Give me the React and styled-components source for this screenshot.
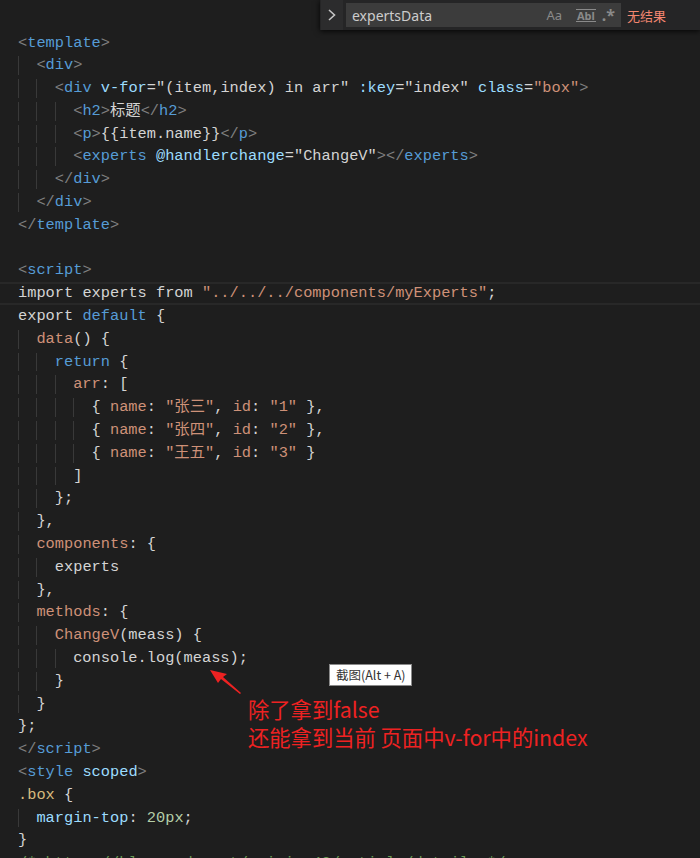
import React from "react";
import styled, { createGlobalStyle } from "styled-components";

const Global = createGlobalStyle`
  html, body { margin: 0; padding: 0; background: #1e1e1e; }
  body { width: 700px; height: 858px; overflow: hidden; }
`;

const COLORS = {
  p: "#808080",
  t: "#569cd6",
  a: "#9cdcfe",
  w: "#d4d4d4",
  s: "#ce9178",
  k: "#569cd6",
  y: "#d7ba7d",
  n: "#b5cea8",
  c: "#6a9955",
};

const Page = styled.div`
  position: relative;
  width: 700px;
  height: 858px;
  overflow: hidden;
  background: #1e1e1e;
`;

const Editor = styled.div`
  padding-top: 31.5px;
  font-family: "Liberation Mono", "Noto Sans CJK SC", monospace;
  font-size: 15.33px;
  color: #d4d4d4;
`;

const Line = styled.div`
  box-sizing: border-box;
  height: 22.8px;
  padding-left: 18px;
  white-space: pre;
  display: flex;
  align-items: stretch;
  border-top: 2px solid ${(p) => (p.$current ? "#282828" : "transparent")};
  border-bottom: 2px solid ${(p) => (p.$current ? "#282828" : "transparent")};
  line-height: 18.8px;
`;

const Guide = styled.span`
  display: inline-block;
  width: 2ch;
  flex: none;
  box-shadow: inset 1px 0 0 #393939;
`;

const Tok = styled.span`
  color: ${(p) => COLORS[p.$c]};
`;

const lines = [
  [0, [["p", "<"], ["t", "template"], ["p", ">"]]],
  [1, [["p", "<"], ["t", "div"], ["p", ">"]]],
  [2, [["p", "<"], ["t", "div"], ["w", " "], ["a", "v-for"], ["w", '="(item,index) in arr" '], ["a", ":key"], ["w", '="index" '], ["a", "class"], ["w", "="], ["s", '"box"'], ["p", ">"]]],
  [3, [["p", "<"], ["t", "h2"], ["p", ">"], ["w", "标题"], ["p", "</"], ["t", "h2"], ["p", ">"]]],
  [3, [["p", "<"], ["t", "p"], ["p", ">"], ["w", "{{item.name}}"], ["p", "</"], ["t", "p"], ["p", ">"]]],
  [3, [["p", "<"], ["t", "experts"], ["w", " "], ["a", "@handlerchange"], ["w", '="ChangeV"'], ["p", "></"], ["t", "experts"], ["p", ">"]]],
  [2, [["p", "</"], ["t", "div"], ["p", ">"]]],
  [1, [["p", "</"], ["t", "div"], ["p", ">"]]],
  [0, [["p", "</"], ["t", "template"], ["p", ">"]]],
  [0, []],
  [0, [["p", "<"], ["t", "script"], ["p", ">"]]],
  [0, [["w", "import experts from "], ["s", '"../../../components/myExperts"'], ["w", ";"]], true],
  [0, [["w", "export "], ["k", "default"], ["w", " {"]]],
  [1, [["s", "data"], ["w", "() {"]]],
  [2, [["k", "return"], ["w", " {"]]],
  [3, [["s", "arr"], ["w", ": ["]]],
  [4, [["w", "{ "], ["s", "name"], ["w", ": "], ["s", '"张三"'], ["w", ", "], ["s", "id"], ["w", ": "], ["s", '"1"'], ["w", " },"]]],
  [4, [["w", "{ "], ["s", "name"], ["w", ": "], ["s", '"张四"'], ["w", ", "], ["s", "id"], ["w", ": "], ["s", '"2"'], ["w", " },"]]],
  [4, [["w", "{ "], ["s", "name"], ["w", ": "], ["s", '"王五"'], ["w", ", "], ["s", "id"], ["w", ": "], ["s", '"3"'], ["w", " }"]]],
  [3, [["w", "]"]]],
  [2, [["w", "};"]]],
  [1, [["w", "},"]]],
  [1, [["s", "components"], ["w", ": {"]]],
  [2, [["w", "experts"]]],
  [1, [["w", "},"]]],
  [1, [["s", "methods"], ["w", ": {"]]],
  [2, [["s", "ChangeV"], ["w", "(meass) {"]]],
  [3, [["w", "console.log(meass);"]]],
  [2, [["w", "}"]]],
  [1, [["w", "}"]]],
  [0, [["w", "};"]]],
  [0, [["p", "</"], ["t", "script"], ["p", ">"]]],
  [0, [["p", "<"], ["t", "style"], ["w", " "], ["a", "scoped"], ["p", ">"]]],
  [0, [["y", ".box"], ["w", " {"]]],
  [1, [["a", "margin-top"], ["w", ": "], ["n", "20px"], ["w", ";"]]],
  [0, [["w", "}"]]],
  [0, [["c", "/* https://blog.csdn.net/weixin_43/article/details */"]]],
];

/* Find widget */
const FindWidget = styled.div`
  position: absolute;
  top: 0;
  left: 320px;
  right: 0;
  height: 30px;
  background: #252526;
  box-shadow: 0 1px 6px rgba(0, 0, 0, 0.9);
  display: flex;
  align-items: center;
  font-family: "Noto Sans", "Noto Sans CJK SC", sans-serif;
  font-size: 13px;
`;

const ToggleBtn = styled.div`
  width: 22px;
  height: 30px;
  margin-left: 1px;
  background: #2c2c2d;
  display: flex;
  align-items: center;
  justify-content: center;
`;

const InputBox = styled.div`
  margin-left: 3px;
  width: 275px;
  height: 24px;
  background: #3c3c3c;
  display: flex;
  align-items: center;
  padding-left: 6px;
  box-sizing: border-box;
`;

const InputText = styled.span`
  flex: 1;
  color: #cccccc;
  font-size: 14px;
`;

const Opt = styled.span`
  color: #8a8a8a;
  font-size: ${(p) => p.$size || "12px"};
  margin-right: ${(p) => p.$mr || "8px"};
  font-weight: ${(p) => (p.$bold ? 700 : 400)};
  line-height: 1;
  ${(p) => (p.$boxed ? "border-top: 1px solid #8a8a8a; border-bottom: 1px solid #8a8a8a; padding: 0 1px; font-size: 11px;" : "")}
`;

const NoResult = styled.span`
  margin-left: 6px;
  color: #f48771;
  font-size: 13px;
`;

/* Tooltip */
const Tooltip = styled.div`
  position: absolute;
  left: 329px;
  top: 664px;
  height: 20px;
  padding: 0 6px;
  background: #ffffff;
  border: 1px solid #8a8a8a;
  color: #333;
  font-family: "Noto Sans CJK SC", sans-serif;
  font-size: 12.5px;
  line-height: 20px;
`;

const Note = styled.div`
  position: absolute;
  left: 248px;
  top: 695px;
  color: #ee2222;
  font-family: "Noto Sans CJK SC", sans-serif;
  font-size: 21.3px;
  line-height: 28px;
  white-space: pre;
`;

const Arrow = styled.svg`
  position: absolute;
  left: 205px;
  top: 664px;
`;

export default function App() {
  return (
    <Page>
      <Global />
      <Editor>
        {lines.map(([indent, toks, current], i) => (
          <Line key={i} $current={current}>
            {Array.from({ length: indent }).map((_, g) => (
              <Guide key={g} />
            ))}
            {toks.map(([c, t], j) => (
              <Tok key={j} $c={c}>
                {t}
              </Tok>
            ))}
          </Line>
        ))}
      </Editor>

      <FindWidget>
        <ToggleBtn>
          <svg width="10" height="14" viewBox="0 0 10 14">
            <path d="M2 2 L7.5 7 L2 12" stroke="#c5c5c5" strokeWidth="1.6" fill="none" />
          </svg>
        </ToggleBtn>
        <InputBox>
          <InputText>expertsData</InputText>
          <Opt $size="13px" $mr="14px">Aa</Opt>
          <Opt $boxed $mr="6px" $bold>Abl</Opt>
          <Opt $size="16px" $mr="6px" $bold>.*</Opt>
        </InputBox>
        <NoResult>无结果</NoResult>
      </FindWidget>

      <Tooltip>截图(Alt + A)</Tooltip>

      <Arrow width="40" height="34" viewBox="0 0 40 34">
        <path d="M5 6 L22 10 L18 13 L36 29 L35 30 L16 15 L13 19 Z" fill="#ee2222" />
      </Arrow>

      <Note>{"除了拿到false\n还能拿到当前 页面中v-for中的index"}</Note>
    </Page>
  );
}
